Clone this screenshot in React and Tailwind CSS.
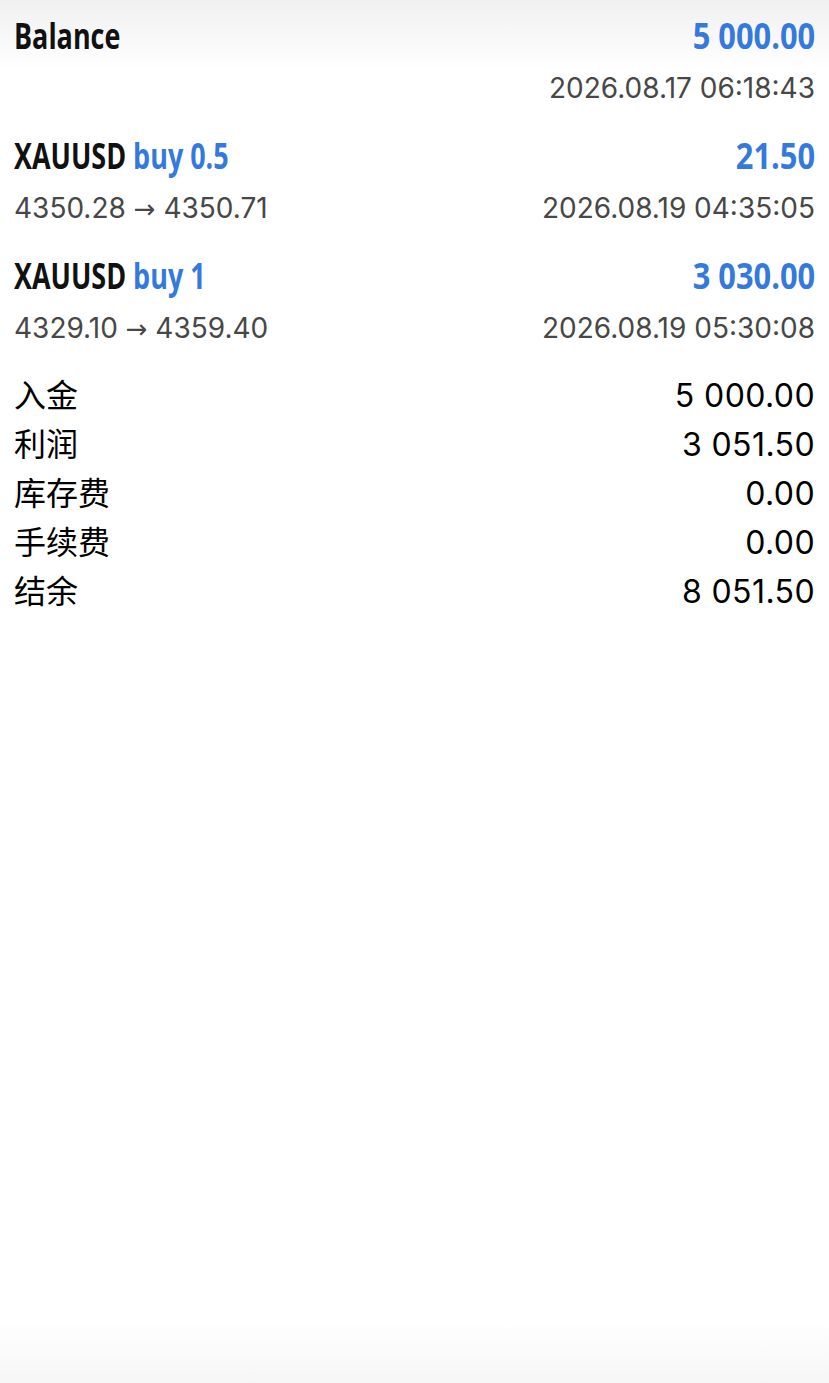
const rows = [
  {
    title: "Balance",
    detail: null,
    amount: "5 000.00",
    time: "2026.08.17 06:18:43"
  },
  {
    title: "XAUUSD",
    detail: "buy 0.5",
    prices: ["4350.28", "4350.71"],
    amount: "21.50",
    time: "2026.08.19 04:35:05"
  },
  {
    title: "XAUUSD",
    detail: "buy 1",
    prices: ["4329.10", "4359.40"],
    amount: "3 030.00",
    time: "2026.08.19 05:30:08"
  }
];

const summary = [
  ["入金", "5 000.00"],
  ["利润", "3 051.50"],
  ["库存费", "0.00"],
  ["手续费", "0.00"],
  ["结余", "8 051.50"]
];

function HistoryRow({ row }) {
  return (
    <div className="mb-[27px]">
      <div className="flex h-[48px] items-start justify-between font-['Open_Sans',sans-serif] text-[35px] font-bold leading-[48px]">
        <span className="inline-block origin-left scale-x-[0.77] whitespace-nowrap text-[#111]">
          {row.title}
          {row.detail ? <span className="text-[#3479dc]"> {row.detail}</span> : null}
        </span>
        <span className="inline-block origin-right scale-x-[0.88] whitespace-nowrap text-[#3479dc]">
          {row.amount}
        </span>
      </div>
      <div className="mt-[11px] flex h-[34px] justify-between font-['Inter',sans-serif] text-[28px] leading-[34px] text-[#474747]">
        <span>
          {row.prices ? (
            <>
              {row.prices[0]}{" "}
              <span className="font-['DejaVu_Sans',sans-serif] text-[26px]">→</span>{" "}
              {row.prices[1]}
            </>
          ) : null}
        </span>
        <span>{row.time}</span>
      </div>
    </div>
  );
}

export default function App() {
  return (
    <main className="min-h-[1383px] bg-[linear-gradient(to_bottom,#f0f0f0_0px,#ffffff_70px,#ffffff_1320px,#f6f6f6_1383px)] px-[14px] pt-[12px]">
      {rows.map((row, i) => (
        <HistoryRow key={i} row={row} />
      ))}
      <div className="-mt-[1px] font-['Inter','Noto_Sans_CJK_SC',sans-serif] text-[32px] leading-[49px] text-black">
        {summary.map(([label, value]) => (
          <div key={label} className="flex h-[49px] justify-between">
            <span>{label}</span>
            <span className="tracking-[0.4px]">{value}</span>
          </div>
        ))}
      </div>
    </main>
  );
}
